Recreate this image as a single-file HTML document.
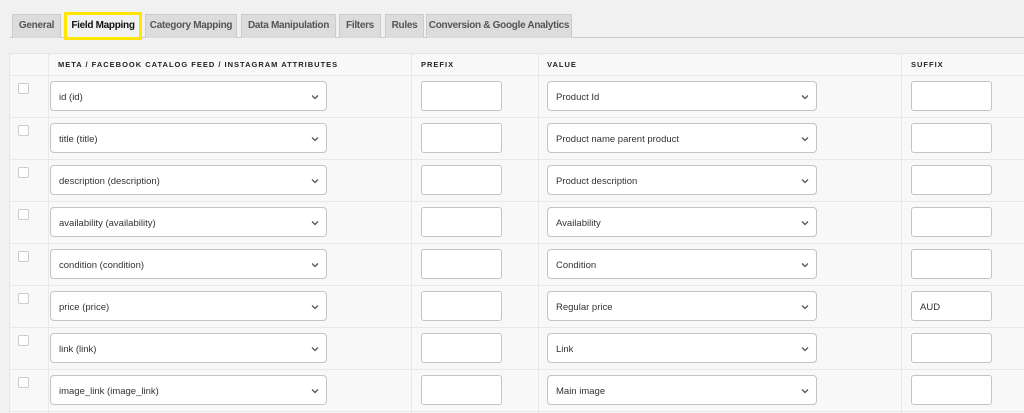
<!DOCTYPE html>
<html><head><style>
*{box-sizing:border-box;margin:0;padding:0}
html,body{width:1024px;height:413px;overflow:hidden}
body{background:#f1f1f1;font-family:"Liberation Sans",sans-serif;position:relative}
.tab{position:absolute;top:14px;height:24px;background:#dcdcdc;border:1px solid #ccc;border-bottom:none;font-size:10px;letter-spacing:-0.3px;font-weight:bold;color:#555;line-height:22px;text-align:center;white-space:nowrap;overflow:hidden}
.line{position:absolute;left:10px;right:0;top:37px;height:1px;background:#ccc}
.tbl{position:absolute;left:9px;top:53px;width:1030px;height:370px;background:#f8f8f8;border:1px solid #e6e6e6}
.h{position:absolute;top:60px;font-size:7.5px;font-weight:bold;letter-spacing:1px;color:#222}
.vl{position:absolute;top:53px;height:370px;width:1px;background:#e8e8e8}
.hl{position:absolute;left:9px;right:0;height:1px;background:#e8e8e8}
.cb{position:absolute;left:18px;width:11px;height:11px;background:#fff;border:1px solid #ccc;border-radius:2px}
.sel{position:absolute;height:30px;background:#fff;border:1px solid #c4c4c4;border-radius:4px;font-size:9.5px;color:#333;line-height:28px;padding-left:8px;padding-top:2px;white-space:nowrap}
.sel svg{position:absolute;right:7px;top:12px}
.in{position:absolute;width:81px;height:30px;background:#fff;border:1px solid #c4c4c4;border-radius:3px;font-size:9.5px;color:#333;line-height:28px;padding-left:8px;padding-top:2px}
</style></head><body>
<div class="line"></div>
<div class="tab" style="left:12px;width:49px">General</div>
<div class="tab" style="left:64px;width:78px;top:12px;height:28px;background:#f1f1f1;border:3px solid #ffe600;color:#111;line-height:22px">Field Mapping</div>
<div class="tab" style="left:145px;width:92px">Category Mapping</div>
<div class="tab" style="left:241px;width:95px">Data Manipulation</div>
<div class="tab" style="left:339px;width:42px">Filters</div>
<div class="tab" style="left:385px;width:39px">Rules</div>
<div class="tab" style="left:426px;width:146px">Conversion &amp; Google Analytics</div>
<div class="tbl"></div>
<div class="vl" style="left:48px"></div><div class="vl" style="left:411px"></div><div class="vl" style="left:538px"></div><div class="vl" style="left:901px"></div>
<div class="h" style="left:58px">META / FACEBOOK CATALOG FEED / INSTAGRAM ATTRIBUTES</div>
<div class="h" style="left:421px">PREFIX</div>
<div class="h" style="left:547px">VALUE</div>
<div class="h" style="left:911px">SUFFIX</div>
<div id="rows"></div>
<script>
var a=[["id (id)","Product Id",""],["title (title)","Product name parent product",""],["description (description)","Product description",""],["availability (availability)","Availability",""],["condition (condition)","Condition",""],["price (price)","Regular price","AUD"],["link (link)","Link",""],["image_link (image_link)","Main image",""]];
var ch='<svg width="8" height="6" viewBox="0 0 8 6"><path d="M1 1.5L4 4.5L7 1.5" fill="none" stroke="#555" stroke-width="1.3"/></svg>';
var h='';
a.forEach(function(r,i){var y=75+i*42;
h+='<div class="hl" style="top:'+y+'px"></div>';
h+='<div class="cb" style="top:'+(y+8)+'px"></div>';
h+='<div class="sel" style="left:50px;width:277px;top:'+(y+6)+'px">'+r[0]+ch+'</div>';
h+='<div class="in" style="left:421px;top:'+(y+6)+'px"></div>';
h+='<div class="sel" style="left:547px;width:270px;top:'+(y+6)+'px">'+r[1]+ch+'</div>';
h+='<div class="in" style="left:911px;top:'+(y+6)+'px">'+r[2]+'</div>';});
h+='<div class="hl" style="top:411px"></div>';
document.getElementById('rows').innerHTML=h;
</script>
</body></html>
